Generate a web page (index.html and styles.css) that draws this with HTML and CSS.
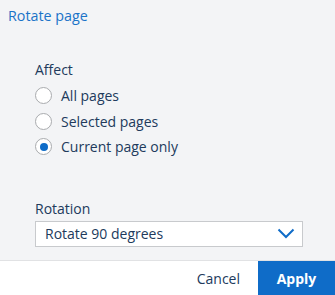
FILE: index.html
```html
<!DOCTYPE html>
<html>
<head>
<meta charset="utf-8">
<link rel="stylesheet" href="styles.css">
</head>
<body>
<div class="panel">
  <div class="title">Rotate page</div>
  <div class="content">
    <div class="group">
      <div class="label">Affect</div>
      <label class="radio"><span class="circle"></span><span>All pages</span></label>
      <label class="radio"><span class="circle"></span><span>Selected pages</span></label>
      <label class="radio"><span class="circle checked"></span><span>Current page only</span></label>
    </div>
    <div class="group rotation">
      <div class="label">Rotation</div>
      <div class="select">
        <span>Rotate 90 degrees</span>
        <svg class="chev" width="18" height="11" viewBox="0 0 18 11"><path d="M1.5 1.5 L9 9 L16.5 1.5" fill="none" stroke="#0f6cc8" stroke-width="2"/></svg>
      </div>
    </div>
  </div>
  <div class="footer">
    <button class="cancel">Cancel</button>
    <button class="apply">Apply</button>
  </div>
</div>
</body>
</html>
```
FILE: styles.css
```css
html, body {
  margin: 0;
  padding: 0;
}
body {
  background: #f3f4f6;
  font-family: "Open Sans", "Noto Sans", sans-serif;
  font-size: 14px;
  color: #213a5c;
}
.panel {
  width: 335px;
  height: 295px;
  display: flex;
  flex-direction: column;
}
.title {
  color: #1a73c8;
  font-size: 14.3px;
  padding: 6px 8px 0 8px;
  height: 24px;
  line-height: 20px;
}
.content {
  flex: 1;
  padding: 30px 32px 0 35px;
}
.label {
  line-height: 20px;
  height: 20px;
}
.radio {
  display: flex;
  align-items: center;
  gap: 9px;
  height: 25.5px;
}
.group:first-child .label {
  margin-bottom: 3px;
}
.circle {
  width: 15px;
  height: 15px;
  border: 1px solid #a9abae;
  border-radius: 50%;
  background: #fff;
  display: flex;
  align-items: center;
  justify-content: center;
  box-sizing: content-box;
}
.circle.checked::after {
  content: "";
  width: 8px;
  height: 8px;
  border-radius: 50%;
  background: #0f6cc8;
}
.rotation {
  margin-top: 39px;
}
.rotation .label {
  margin-bottom: 2px;
}
.select {
  height: 26px;
  border: 1px solid #c8cacd;
  background: #fff;
  box-sizing: border-box;
  display: flex;
  align-items: center;
  justify-content: space-between;
  padding: 0 7px 0 9px;
  width: 268px;
}
.chev {
  display: block;
}
.footer {
  height: 34px;
  background: #fff;
  border-top: 1px solid #e1e2e4;
  display: flex;
  justify-content: flex-end;
  align-items: stretch;
}
.footer button {
  font-family: inherit;
  font-size: 14px;
  border: none;
  margin: 0;
  cursor: pointer;
}
.cancel {
  background: transparent;
  color: #213a5c;
  padding: 0 18px;
}
.apply {
  background: #0f6cc8;
  color: #fff;
  font-weight: 700;
  width: 77px;
}
```
